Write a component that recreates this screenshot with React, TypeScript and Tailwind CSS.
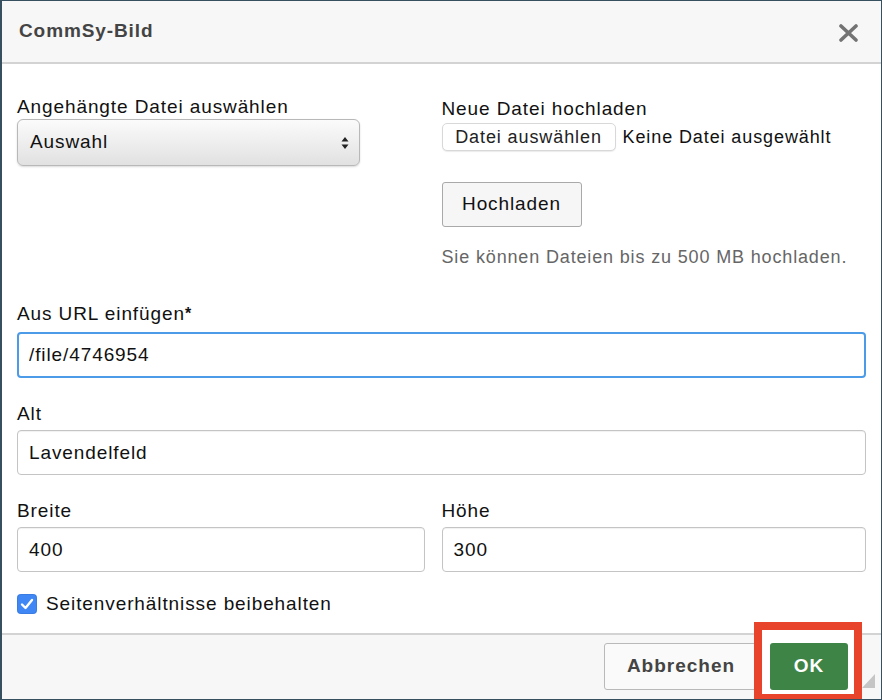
import { useState } from 'react';

const labelCls = "block text-[19px] leading-[20px] tracking-[0.9px] text-[#111]";
const inputCls =
  "w-full h-[45px] rounded-[4px] border-[1.5px] border-[#c4c4c4] bg-white px-[11px] text-[19px] tracking-[0.9px] text-[#111] shadow-[inset_0_1px_1px_rgba(0,0,0,0.06)] outline-none";

export default function App() {
  const [url, setUrl] = useState('/file/4746954');
  const [alt, setAlt] = useState('Lavendelfeld');
  const [width, setWidth] = useState('400');
  const [height, setHeight] = useState('300');
  const [keepRatio, setKeepRatio] = useState(true);

  return (
    <div className="relative w-[882px] h-[700px] flex flex-col bg-white border-y border-r border-l-2 border-[#36505f] font-['Liberation_Sans',Arial,sans-serif] text-[#111] overflow-hidden">
      {/* Header */}
      <div className="h-[63px] shrink-0 flex items-center justify-between pl-[17px] pr-[23px] bg-[#f7f7f7] border-b-2 border-[#d3d3d3]">
        <span className="text-[19px] font-bold tracking-[0.9px] text-[#444]">CommSy-Bild</span>
        <svg width="19" height="18" viewBox="0 0 19 18" className="mt-[2px]">
          <path d="M2 2 L17 16 M17 2 L2 16" stroke="#737373" strokeWidth="3.6" strokeLinecap="round" />
        </svg>
      </div>

      {/* Body */}
      <div className="flex-1 px-[15px]">
        <div className="grid grid-cols-2 pt-[33px]">
          <div className="pr-[82px]">
            <label className={labelCls}>Angehängte Datei auswählen</label>
            <div className="mt-[2px] h-[47px] flex items-center justify-between rounded-[6px] border border-[#b8b8b8] bg-gradient-to-b from-[#fbfbfb] to-[#e1e1e1] pl-[12px] pr-[10px] shadow-[0_1px_2px_rgba(0,0,0,0.15)]">
              <span className="text-[19px] tracking-[0.9px]">Auswahl</span>
              <svg width="8" height="14" viewBox="0 0 8 14">
                <path d="M4 1 L7.5 5.5 H0.5 Z M4 13 L7.5 8.5 H0.5 Z" fill="#222" />
              </svg>
            </div>
          </div>
          <div>
            <label className={`${labelCls} mt-[2px]`}>Neue Datei hochladen</label>
            <div className="mt-[4px] flex items-center gap-[7px]">
              <button className="h-[28px] w-[174px] rounded-[5px] border border-[#d8d8d8] bg-white text-[18px] tracking-[0.9px] text-[#222] shadow-[0_1px_1px_rgba(0,0,0,0.08)]">
                Datei auswählen
              </button>
              <span className="text-[18px] tracking-[0.9px]">Keine Datei ausgewählt</span>
            </div>
            <button className="mt-[31px] h-[45px] w-[140px] rounded-[3px] border border-[#a9a9a9] bg-[#f6f6f6] text-[19px] tracking-[0.9px]">
              Hochladen
            </button>
            <p className="mt-[20px] text-[18px] leading-[20px] tracking-[0.85px] text-[#666]">
              Sie können Dateien bis zu 500 MB hochladen.
            </p>
          </div>
        </div>

        <label className={`${labelCls} mt-[37px]`}>
          Aus URL einfügen<sup className="font-bold text-[16px] tracking-normal relative top-[-1px]">*</sup>
        </label>
        <input
          value={url}
          onChange={(e) => setUrl(e.target.value)}
          className="mt-[8px] w-full h-[46px] rounded-[4px] border-[2.5px] border-[#4b9be9] bg-white px-[10px] text-[19px] tracking-[0.9px] text-[#111] outline-none"
        />

        <label className={`${labelCls} mt-[26px]`}>Alt</label>
        <input value={alt} onChange={(e) => setAlt(e.target.value)} className={`${inputCls} mt-[6px]`} />

        <div className="grid grid-cols-2 mt-[26px]">
          <div className="pr-[17px]">
            <label className={labelCls}>Breite</label>
            <input value={width} onChange={(e) => setWidth(e.target.value)} className={`${inputCls} mt-[6px]`} />
          </div>
          <div>
            <label className={labelCls}>Höhe</label>
            <input value={height} onChange={(e) => setHeight(e.target.value)} className={`${inputCls} mt-[6px]`} />
          </div>
        </div>

        <label className="mt-[22px] flex items-center gap-[9px] cursor-pointer">
          <span
            onClick={() => setKeepRatio(!keepRatio)}
            className="w-[20px] h-[20px] rounded-[4px] bg-[#3f87f5] flex items-center justify-center shadow-[inset_0_0_0_1px_rgba(0,0,0,0.08)]"
          >
            {keepRatio && (
              <svg width="14" height="12" viewBox="0 0 14 12">
                <path d="M2 6.5 L5.5 10 L12 2" stroke="white" strokeWidth="2.4" fill="none" strokeLinecap="round" strokeLinejoin="round" />
              </svg>
            )}
          </span>
          <span className="text-[19px] leading-[20px] tracking-[0.9px]">Seitenverhältnisse beibehalten</span>
        </label>
      </div>

      {/* Footer */}
      <div className="h-[66px] shrink-0 flex items-start justify-end gap-[12px] pt-[8px] pr-[33px] bg-[#f7f7f7] border-t-2 border-[#d3d3d3]">
        <button className="h-[47px] w-[154px] rounded-[3px] border border-[#b9b9b9] bg-[#fafafa] text-[19px] font-bold tracking-[1px] text-[#444]">
          Abbrechen
        </button>
        <button className="relative z-[2] h-[47px] w-[78px] rounded-[3px] bg-[#3e8447] text-[19px] font-bold tracking-[1px] text-white">
          OK
        </button>
      </div>

      {/* resize grip */}
      <div className="absolute right-[6px] bottom-[11px] w-0 h-0 border-l-[13px] border-l-transparent border-b-[14px] border-b-[#c5c5c5]" />

      {/* annotation box */}
      <div className="absolute left-[752px] top-[621px] w-[108px] h-[80px] z-[1] bg-white border-[8px] border-[#e8432b]" />
    </div>
  );
}
